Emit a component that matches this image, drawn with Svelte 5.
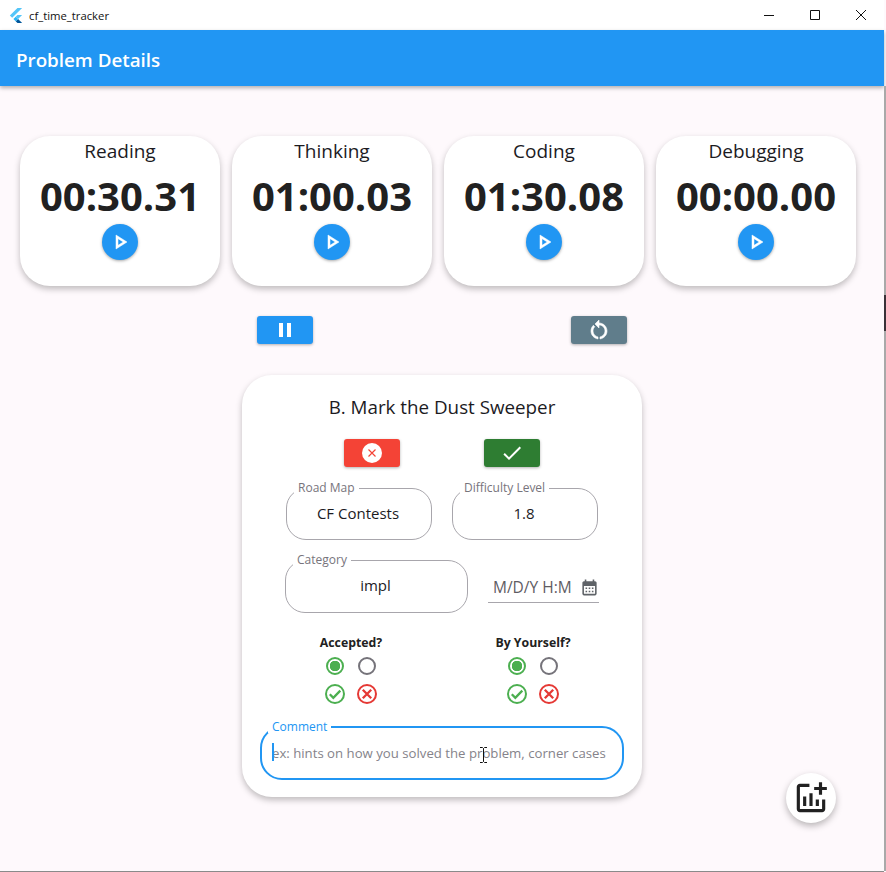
<script>
	const timers = [
		{ name: 'Reading', time: '00:30.31' },
		{ name: 'Thinking', time: '01:00.03' },
		{ name: 'Coding', time: '01:30.08' },
		{ name: 'Debugging', time: '00:00.00' }
	];
	const questions = ['Accepted?', 'By Yourself?'];
</script>

<div class="window">
	<div class="titlebar">
		<svg class="logo" viewBox="0 0 166 202" width="14" height="17">
			<path d="M37.700 128.900 9.800 101 100.400 10.400h55.500M155.900 93.700h-55.500L79.600 114.500l27.800 27.800" fill="#54c5f8" />
			<path d="M79.600 170.600l20.800 20.900h55.500l-48.500-48.600" fill="#01579b" />
			<path d="M51.800 142.800 79.600 114.500l27.800 27.800-27.800 28.300" fill="#29b6f6" />
		</svg>
		<span class="app-name">cf_time_tracker</span>
		<div class="win-controls">
			<svg width="12" height="12" viewBox="0 0 12 12"><path d="M1 6.500h10" stroke="#111" fill="none" /></svg>
			<svg width="12" height="12" viewBox="0 0 12 12"><path d="M1.500 1.500h9v9h-9z" stroke="#111" fill="none" /></svg>
			<svg width="12" height="12" viewBox="0 0 12 12"><path d="M1 1l10 10M11 1L1 11" stroke="#111" fill="none" /></svg>
		</div>
	</div>

	<header class="appbar">Problem Details</header>

	<main>
		<section class="timers">
			{#each timers as t}
				<div class="timer">
					<div class="timer-name">{t.name}</div>
					<div class="timer-time">{t.time}</div>
					<button class="play" aria-label="start">
						<svg viewBox="0 0 24 24" width="24" height="24"><path d="M10 8.640L15.270 12 10 15.360V8.640M8 5v14l11-7L8 5z" fill="#fff" stroke="#fff" stroke-width="0.5" /></svg>
					</button>
				</div>
			{/each}
		</section>

		<section class="controls">
			<button class="small blue" aria-label="pause">
				<svg viewBox="0 0 24 24" width="24" height="24"><path d="M6 19h4V5H6v14zm8-14v14h4V5h-4z" fill="#fff" /></svg>
			</button>
			<button class="small slate" aria-label="reset">
				<svg viewBox="0 0 24 24" width="24" height="24"><path d="M12 5V2L8 6l4 4V7c3.310 0 6 2.690 6 6 0 2.970-2.170 5.430-5 5.910v2.020c3.950-.49 7-3.850 7-7.930 0-4.420-3.580-8-8-8zm-6 8c0-1.650.67-3.150 1.760-4.240L6.340 7.340C4.900 8.790 4 10.790 4 13c0 4.080 3.050 7.440 7 7.930v-2.020c-2.830-.48-5-2.940-5-5.910z" fill="#fff" stroke="#fff" stroke-width="0.6" /></svg>
			</button>
		</section>

		<section class="problem">
			<h2>B. Mark the Dust Sweeper</h2>

			<div class="verdicts">
				<button class="small red" aria-label="wrong">
					<span class="x-disc">
						<svg viewBox="0 0 24 24" width="14" height="14"><path d="M6 6l12 12M18 6L6 18" stroke="#f44336" stroke-width="2" fill="none" /></svg>
					</span>
				</button>
				<button class="small green" aria-label="right">
					<svg viewBox="0 0 24 24" width="24" height="24"><path d="M9 16.170L4.830 12l-1.420 1.410L9 19 21 7l-1.410-1.410z" fill="#fff" /></svg>
				</button>
			</div>

			<div class="fields first">
				<fieldset class="field">
					<legend>Road Map</legend>
					<div class="value">CF Contests</div>
				</fieldset>
				<fieldset class="field">
					<legend>Difficulty Level</legend>
					<div class="value">1.8</div>
				</fieldset>
			</div>

			<div class="fields second">
				<fieldset class="field category">
					<legend>Category</legend>
					<div class="value">impl</div>
				</fieldset>
				<div class="date">
					<span>M/D/Y H:M</span>
					<svg viewBox="0 0 24 24" width="19" height="19"><path d="M19 4h-1V2h-2v2H8V2H6v2H5c-1.110 0-1.990.9-1.990 2L3 20c0 1.100.89 2 2 2h14c1.100 0 2-.9 2-2V6c0-1.100-.9-2-2-2zm0 16H5V10h14v10zM9 14H7v-2h2v2zm4 0h-2v-2h2v2zm4 0h-2v-2h2v2zm-8 4H7v-2h2v2zm4 0h-2v-2h2v2zm4 0h-2v-2h2v2z" fill="#5f6368" /></svg>
				</div>
			</div>

			<div class="questions">
				{#each questions as q}
					<div class="question">
						<div class="q-label">{q}</div>
						<div class="q-grid">
							<span class="radio on"></span>
							<span class="radio"></span>
							<svg viewBox="0 0 22 22" width="22" height="22"><circle cx="11" cy="11" r="9" stroke="#4caf50" stroke-width="2" fill="none" /><path d="M5.800 11.300l3.500 3.500 7-7.200" stroke="#4caf50" stroke-width="2.300" fill="none" /></svg>
							<svg viewBox="0 0 22 22" width="22" height="22"><circle cx="11" cy="11" r="9" stroke="#e53935" stroke-width="2" fill="none" /><path d="M6.800 6.800l8.400 8.400M15.200 6.800l-8.400 8.400" stroke="#e53935" stroke-width="2.300" fill="none" /></svg>
						</div>
					</div>
				{/each}
			</div>

			<fieldset class="field comment">
				<legend>Comment</legend>
				<div class="placeholder"><span class="caret"></span>ex: hints on how you solved the problem, corner cases</div>
				<svg class="ibeam" viewBox="0 0 9 16" width="9" height="16"><path d="M1 .5h2.500l1 1 1-1H8M4.500 1.500v13M1 15.500h2.500l1-1 1 1H8" stroke="#111" fill="none" /></svg>
			</fieldset>
		</section>

		<button class="fab" aria-label="add chart">
			<svg viewBox="0 0 24 24" width="38" height="38"><path d="M22 5v2h-3v3h-2V7h-3V5h3V2h2v3h3zm-3 14H5V5h6V3H5c-1.100 0-2 .9-2 2v14c0 1.100.9 2 2 2h14c1.100 0 2-.9 2-2v-6h-2v6zm-4-6v4h2v-4h-2zm-4 4h2V9h-2v8zm-2 0v-6H7v6h2z" fill="#212121" /></svg>
		</button>
		<div class="edge-mark"></div>
	</main>
</div>

<style>
	:global(body) {
		margin: 0;
		background: #fef9fc;
	}

	.window {
		width: 884px;
		height: 871px;
		display: flex;
		flex-direction: column;
		font-family: "Open Sans", "Noto Sans", sans-serif;
		color: #1c1b1f;
		background: #fef9fc;
		border-bottom: 1px solid #8a8a8a;
	}

	.titlebar {
		height: 30px;
		flex: none;
		background: #fff;
		display: flex;
		align-items: center;
		padding-left: 9px;
		font-size: 11.300px;
		color: #111;
	}

	.logo {
		margin-right: 6px;
	}

	.win-controls {
		margin-left: auto;
		display: flex;
		gap: 34px;
		padding-right: 17px;
	}

	.appbar {
		height: 56px;
		flex: none;
		box-sizing: border-box;
		background: #2196f3;
		color: #fff;
		font-size: 18.800px;
		font-weight: 600;
		line-height: 60px;
		padding-left: 16px;
		box-shadow: 0 2px 4px rgba(0, 0, 0, 0.3);
		position: relative;
	}

	main {
		flex: 1;
		position: relative;
		padding-top: 50px;
		border-right: 2px solid #a9a9a9;
		margin-right: -2px;
	}

	button {
		border: none;
		padding: 0;
		display: flex;
		align-items: center;
		justify-content: center;
	}

	.timers {
		display: flex;
		gap: 12px;
		padding-left: 20px;
	}

	.timer {
		width: 200px;
		height: 150px;
		background: #fff;
		border-radius: 30px;
		box-shadow: 0 3px 6px rgba(0, 0, 0, 0.25);
		display: flex;
		flex-direction: column;
		align-items: center;
	}

	.timer-name {
		font-size: 19px;
		line-height: 30px;
	}

	.timer-time {
		font-size: 40px;
		font-weight: 700;
		line-height: 50px;
		margin-top: 5px;
		color: #212121;
	}

	.play {
		width: 36px;
		height: 36px;
		margin-top: 3px;
		border-radius: 50%;
		background: #2196f3;
		box-shadow: 0 1px 3px rgba(0, 0, 0, 0.35);
	}

	.controls {
		display: flex;
		justify-content: center;
		gap: 258px;
		margin-top: 30px;
	}

	.small {
		width: 56px;
		height: 28px;
		border-radius: 3px;
		box-shadow: 0 1px 3px rgba(0, 0, 0, 0.3);
	}

	.blue { background: #2196f3; }
	.slate { background: #607d8b; }
	.red { background: #f44336; }
	.green { background: #2e7d32; }

	.x-disc {
		width: 20px;
		height: 20px;
		border-radius: 50%;
		background: #fff;
		display: flex;
		align-items: center;
		justify-content: center;
	}

	.problem {
		width: 400px;
		height: 422px;
		box-sizing: border-box;
		margin: 31px auto 0;
		padding-top: 19px;
		background: #fff;
		border-radius: 30px;
		box-shadow: 0 3px 6px rgba(0, 0, 0, 0.25);
		display: flex;
		flex-direction: column;
		align-items: center;
	}

	h2 {
		margin: 0;
		font-size: 18.800px;
		font-weight: 400;
		line-height: 26px;
	}

	.verdicts {
		display: flex;
		gap: 84px;
		margin-top: 19px;
	}

	.fields {
		display: flex;
		align-self: flex-start;
	}

	.fields.first {
		gap: 20px;
		margin-top: 15px;
		margin-left: 44px;
	}

	.fields.second {
		gap: 20px;
		margin-top: 14px;
		margin-left: 43px;
		align-items: flex-end;
	}

	.field {
		width: 146px;
		height: 58px;
		box-sizing: border-box;
		margin: 0;
		padding: 0 13px 0 11px;
		border: 1px solid #a8a6ac;
		border-radius: 20px;
		min-width: 0;
	}

	.field legend {
		padding: 0 4px;
		margin-left: -4px;
		font-size: 12px;
		line-height: 12px;
		color: #77747c;
	}

	.category {
		width: 183px;
		height: 59px;
	}

	.value {
		font-size: 15px;
		line-height: 22px;
		text-align: center;
		margin-top: 8px;
	}

	.date {
		width: 111px;
		height: 31px;
		box-sizing: border-box;
		border-bottom: 1px solid #a8a6ac;
		display: flex;
		align-items: center;
		justify-content: space-between;
		padding: 0 0 0 5px;
		font-size: 15.500px;
		color: #5f5c63;
		margin-bottom: 10px;
	}

	.questions {
		display: flex;
		gap: 62px;
		margin-top: 21px;
		margin-left: 9px;
		align-self: flex-start;
		padding-left: 40px;
	}

	.question {
		width: 120px;
		display: flex;
		flex-direction: column;
		align-items: center;
	}

	.q-label {
		font-size: 12.300px;
		font-weight: 700;
		line-height: 18px;
		color: #212121;
	}

	.q-grid {
		display: grid;
		grid-template-columns: 22px 22px;
		column-gap: 10px;
		row-gap: 8px;
		justify-items: center;
		align-items: center;
		margin-top: 5px;
	}

	.radio {
		width: 18px;
		height: 18px;
		box-sizing: border-box;
		border: 2px solid #75737a;
		border-radius: 50%;
	}

	.radio.on {
		border-color: #4caf50;
		background: radial-gradient(circle, #4caf50 0 5px, transparent 5.500px);
	}

	.comment {
		width: 364px;
		height: 59px;
		margin-top: 16px;
		border: 2px solid #2196f3;
		border-radius: 22px;
		position: relative;
		padding: 0 10px;
	}

	.comment legend {
		margin-left: -4px;
		color: #2196f3;
	}

	.placeholder {
		font-size: 13.200px;
		line-height: 22px;
		margin-top: 9px;
		color: #85838a;
		white-space: nowrap;
		position: relative;
	}

	.caret {
		position: absolute;
		left: 0;
		top: 1px;
		width: 2px;
		height: 18px;
		background: #2196f3;
	}

	.ibeam {
		position: absolute;
		left: 217px;
		top: 14px;
	}

	.fab {
		position: absolute;
		left: 786px;
		top: 687px;
		width: 50px;
		height: 50px;
		border-radius: 50%;
		background: #fff;
		box-shadow: 0 3px 7px rgba(0, 0, 0, 0.28);
	}

	.edge-mark {
		position: absolute;
		right: -2px;
		top: 209px;
		width: 2px;
		height: 36px;
		background: #3a3238;
	}
</style>
